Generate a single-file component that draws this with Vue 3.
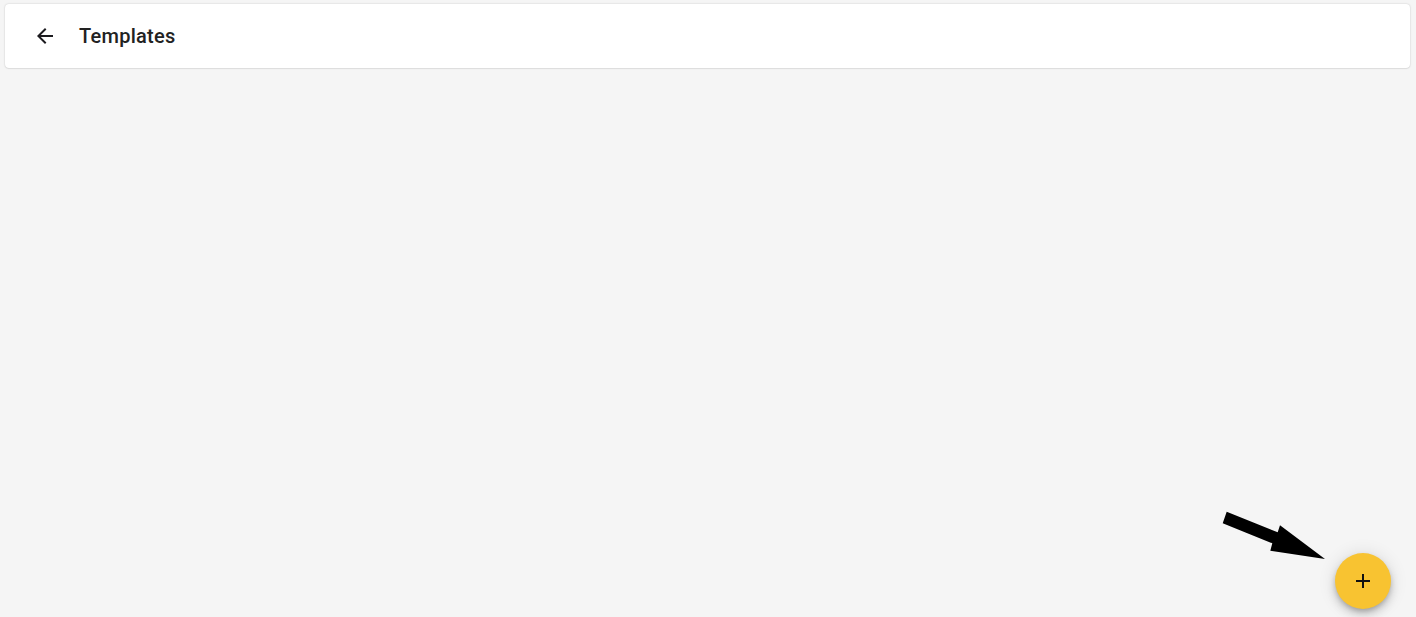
<template>
  <div class="page">
    <header class="toolbar">
      <button class="back" aria-label="Back">
        <svg width="24" height="24" viewBox="0 0 24 24"><path d="M20 11H7.83l5.59-5.59L12 4l-8 8 8 8 1.41-1.41L7.83 13H20v-2z" /></svg>
      </button>
      <h1 class="title">Templates</h1>
    </header>

    <svg class="pointer" width="110" height="56" viewBox="1220 508 110 56">
      <polygon points="1226.7,511.7 1222.7,523.3 1272.3,543.3 1270.3,550.7 1325,559 1280,525.3 1277.7,532.3" />
    </svg>

    <button class="fab" aria-label="Add template">
      <svg width="24" height="24" viewBox="0 0 24 24"><path d="M19 13h-6v6h-2v-6H5v-2h6V5h2v6h6v2z" /></svg>
    </button>
  </div>
</template>

<script setup>
</script>

<style>
body {
  margin: 0;
  background: #f5f5f5;
}
</style>

<style scoped>
.page {
  position: relative;
  height: 617px;
  box-sizing: border-box;
  padding: 4px 6px 0 5px;
  overflow: hidden;
  background: #f5f5f5;
  font-family: Roboto, "Liberation Sans", sans-serif;
}

.toolbar {
  display: flex;
  align-items: center;
  height: 64px;
  padding-left: 16px;
  background: #fff;
  border-radius: 4px;
  box-shadow: 0 0 2px rgba(0, 0, 0, 0.2), 0 1px 1px rgba(0, 0, 0, 0.05);
}

.back {
  display: flex;
  align-items: center;
  justify-content: center;
  width: 48px;
  height: 48px;
  padding: 0;
  border: 0;
  background: none;
  color: #1c1b1f;
}

.back svg,
.fab svg {
  fill: currentColor;
}

.title {
  margin: 0 0 0 10px;
  font-size: 20px;
  font-weight: 500;
  line-height: 32px;
  letter-spacing: 0.25px;
  color: #222;
}

.pointer {
  position: absolute;
  left: 1220px;
  top: 508px;
}

.fab {
  position: absolute;
  left: 1335px;
  top: 553px;
  display: flex;
  align-items: center;
  justify-content: center;
  width: 56px;
  height: 56px;
  padding: 0;
  border: 0;
  border-radius: 50%;
  background: #f8c331;
  color: #111;
  box-shadow: 0 3px 5px -1px rgba(0, 0, 0, 0.2), 0 6px 10px 0 rgba(0, 0, 0, 0.14), 0 1px 18px 0 rgba(0, 0, 0, 0.12);
}
</style>
